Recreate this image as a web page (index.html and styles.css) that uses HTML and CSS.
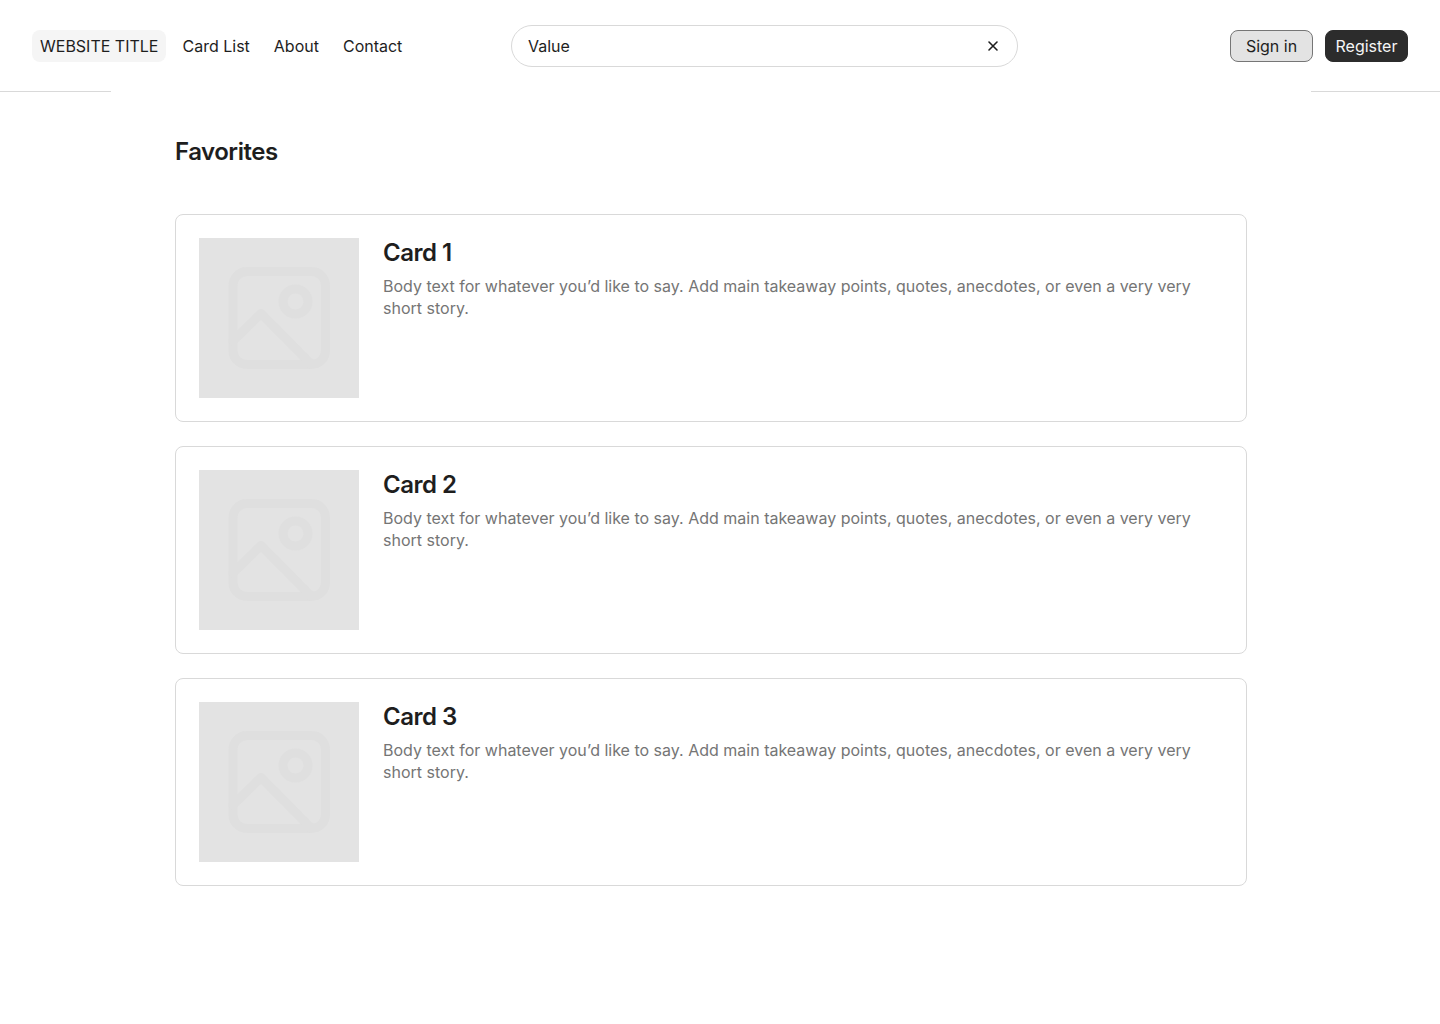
FILE: index.html
```html
<!DOCTYPE html>
<html lang="en">
<head>
<meta charset="utf-8">
<meta name="viewport" content="width=device-width, initial-scale=1">
<title>Favorites</title>
<link rel="stylesheet" href="styles.css">
</head>
<body>
<svg class="symbols" aria-hidden="true">
  <symbol id="picture" viewBox="0 0 160 160">
    <g fill="none" stroke="currentColor" stroke-width="9" stroke-linecap="round" stroke-linejoin="round">
      <rect x="34" y="33.5" width="92.5" height="93" rx="14"/>
      <circle cx="96.5" cy="63.5" r="12.5"/>
      <path d="M34 103 L62 75.5 L112 126"/>
    </g>
  </symbol>
</svg>
<header class="header">
  <nav class="nav" aria-label="Main">
    <a class="nav-link nav-link-active" href="#">WEBSITE TITLE</a>
    <a class="nav-link" href="#">Card List</a>
    <a class="nav-link" href="#">About</a>
    <a class="nav-link" href="#">Contact</a>
  </nav>
  <form class="search">
    <input class="search-input" type="text" aria-label="Search" value="Value">
    <button class="search-clear" type="reset" aria-label="Clear">
      <svg width="16" height="16" viewBox="0 0 16 16" fill="none" stroke="currentColor" stroke-width="1.6" stroke-linecap="round"><path d="M12 4 L4 12 M4 4 L12 12"/></svg>
    </button>
  </form>
  <div class="auth">
    <button class="button" type="button">Sign in</button>
    <button class="button button-primary" type="button">Register</button>
  </div>
</header>
<main class="main">
  <h1 class="title">Favorites</h1>
  <div class="cards">
    <article class="card">
      <svg class="card-image" aria-hidden="true"><use href="#picture"/></svg>
      <div class="card-body">
        <h2 class="card-title">Card 1</h2>
        <p class="card-text">Body text for whatever you’d like to say. Add main takeaway points, quotes, anecdotes, or even a very very short story.</p>
      </div>
    </article>
    <article class="card">
      <svg class="card-image" aria-hidden="true"><use href="#picture"/></svg>
      <div class="card-body">
        <h2 class="card-title">Card 2</h2>
        <p class="card-text">Body text for whatever you’d like to say. Add main takeaway points, quotes, anecdotes, or even a very very short story.</p>
      </div>
    </article>
    <article class="card">
      <svg class="card-image" aria-hidden="true"><use href="#picture"/></svg>
      <div class="card-body">
        <h2 class="card-title">Card 3</h2>
        <p class="card-text">Body text for whatever you’d like to say. Add main takeaway points, quotes, anecdotes, or even a very very short story.</p>
      </div>
    </article>
  </div>
</main>
</body>
</html>
```
FILE: styles.css
```css
* {
  box-sizing: border-box;
}

body {
  margin: 0;
  background: #fff;
  color: #1e1e1e;
  font: 400 16px/22px Inter, sans-serif;
}

.symbols {
  display: none;
}

.header {
  display: grid;
  grid-template-columns: 479px minmax(240px, 507px) 1fr;
  align-items: center;
  padding: 25px 32px 24px;
  border-bottom: 1px solid #d9d9d9;
}

.nav {
  display: flex;
  gap: 8px;
}

.nav-link {
  padding: 5px 8px;
  border-radius: 8px;
  color: #1e1e1e;
  text-decoration: none;
  white-space: nowrap;
}

.nav-link-active {
  background: #f5f5f5;
}

.search {
  display: flex;
  align-items: center;
  height: 42px;
  padding: 0 16px;
  border: 1px solid #d9d9d9;
  border-radius: 21px;
}

.search-input {
  flex: 1;
  min-width: 0;
  padding: 0;
  border: 0;
  outline: 0;
  background: none;
  color: inherit;
  font: inherit;
}

.search-clear {
  display: flex;
  padding: 0;
  border: 0;
  background: none;
  color: #1e1e1e;
}

.auth {
  display: flex;
  justify-content: flex-end;
  gap: 12px;
}

.button {
  min-width: 83px;
  height: 32px;
  padding: 0 8px;
  border: 1px solid #767676;
  border-radius: 8px;
  background: #e3e3e3;
  color: #1e1e1e;
  font: inherit;
}

.button-primary {
  border-color: #2c2c2c;
  background: #2c2c2c;
  color: #f5f5f5;
}

/* The panel overlaps the header rule by its one pixel. */
.main {
  position: relative;
  margin: -1px 129px 0 111px;
  padding: 46px 64px 64px;
  background: #fff;
}

.title {
  margin: 0 0 48px;
  font-size: 24px;
  font-weight: 600;
  line-height: 29px;
  letter-spacing: -0.02em;
}

.cards {
  display: grid;
  gap: 24px;
}

.card {
  display: flex;
  gap: 24px;
  padding: 23px;
  border: 1px solid #d9d9d9;
  border-radius: 8px;
}

.card-image {
  flex: none;
  width: 160px;
  height: 160px;
  background: #e3e3e3;
  color: #dfdfdf;
}

.card-body {
  flex: 1;
}

.card-title {
  margin: 0 0 8px;
  font-size: 24px;
  font-weight: 600;
  line-height: 29px;
  letter-spacing: -0.02em;
}

.card-text {
  margin: 0;
  color: #757575;
}
```
